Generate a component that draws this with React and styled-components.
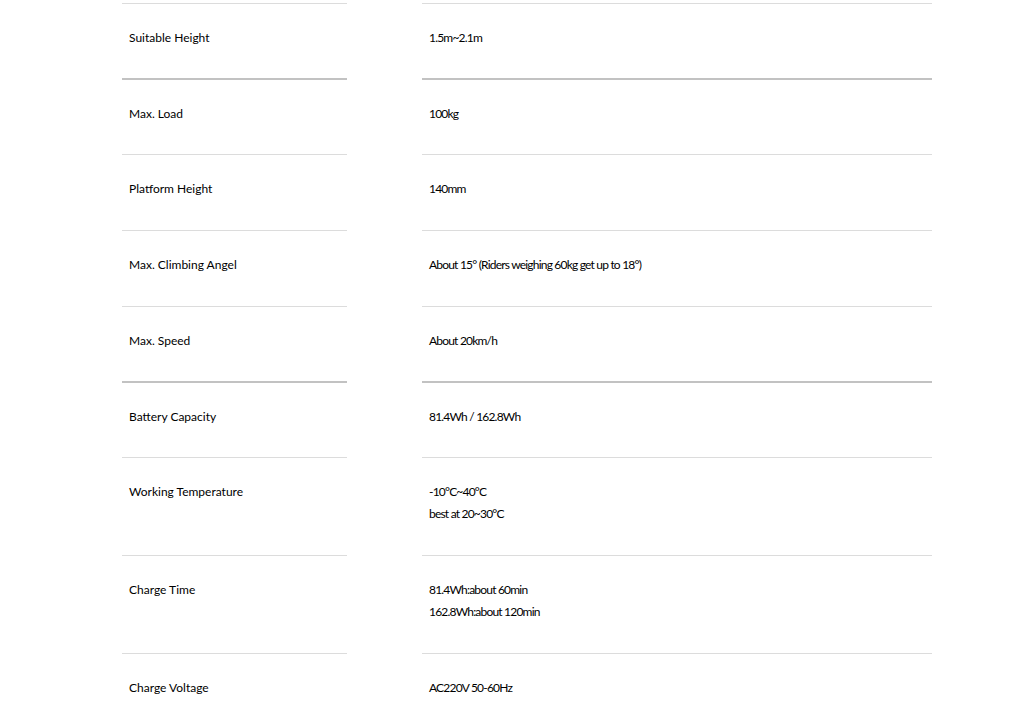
import React from 'react';
import styled, { createGlobalStyle } from 'styled-components';

const GlobalStyle = createGlobalStyle`
  body {
    margin: 0;
    background: #fff;
    font-family: Lato, "Open Sans", sans-serif;
    color: #000;
  }
`;

const Table = styled.div`
  margin: 3px 0 0 122px;
  width: 810px;
`;

const Row = styled.div`
  display: grid;
  grid-template-columns: 225px 510px;
  column-gap: 75px;
  margin-top: ${(p) => (p.$strong ? '-1px' : '0')};
`;

const Cell = styled.div`
  border-top: ${(p) => (p.$strong ? '2px solid #c2c2c2' : '1px solid #dcdcdc')};
  padding: ${(p) => (p.$strong ? '23px 7px 29px' : '23px 7px 30px')};
  font-size: 12px;
  line-height: 22px;
  color: #000;
`;

const Label = styled(Cell)``;

const Value = styled(Cell)`
  letter-spacing: -0.8px;
`;

const specs = [
  { label: 'Suitable Height', value: ['1.5m~2.1m'] },
  { label: 'Max. Load', value: ['100kg'], strong: true },
  { label: 'Platform Height', value: ['140mm'] },
  { label: 'Max. Climbing Angel', value: ['About 15° (Riders weighing 60kg get up to 18°)'] },
  { label: 'Max. Speed', value: ['About 20km/h'] },
  { label: 'Battery Capacity', value: ['81.4Wh / 162.8Wh'], strong: true },
  { label: 'Working Temperature', value: ['-10°C~40°C', 'best at 20~30°C'] },
  { label: 'Charge Time', value: ['81.4Wh:about 60min', '162.8Wh:about 120min'] },
  { label: 'Charge Voltage', value: ['AC220V 50-60Hz'] },
];

export default function App() {
  return (
    <>
      <GlobalStyle />
      <Table>
        {specs.map((s) => (
          <Row key={s.label} $strong={s.strong}>
            <Label $strong={s.strong}>{s.label}</Label>
            <Value $strong={s.strong}>
              {s.value.map((line) => (
                <div key={line}>{line}</div>
              ))}
            </Value>
          </Row>
        ))}
      </Table>
    </>
  );
}
